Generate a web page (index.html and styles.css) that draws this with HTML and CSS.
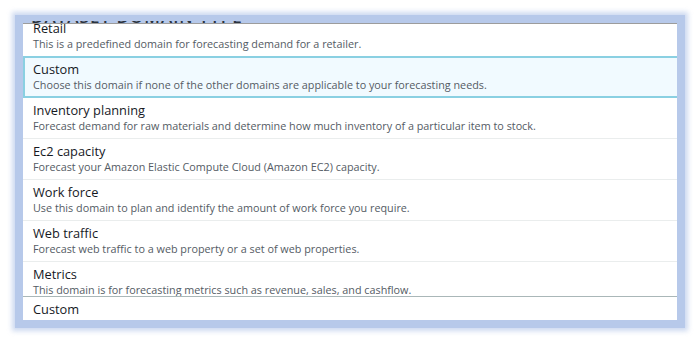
FILE: index.html
```html
<!DOCTYPE html>
<html lang="en">
  <head>
    <meta charset="UTF-8" />
    <title>Domain options</title>
    <link rel="stylesheet" href="styles.css">
  </head>
  <body>
    <div class="dropdown">
      <div class="heading-clip"><span>Dataset domain type</span></div>
      <div class="viewport">
        <ul class="options">
          <li class="option">
            <div class="label">Retail</div>
            <div class="desc">This is a predefined domain for forecasting demand for a retailer.</div>
          </li>
          <li class="option selected">
            <div class="label">Custom</div>
            <div class="desc">Choose this domain if none of the other domains are applicable to your forecasting needs.</div>
          </li>
          <li class="option">
            <div class="label">Inventory planning</div>
            <div class="desc">Forecast demand for raw materials and determine how much inventory of a particular item to stock.</div>
          </li>
          <li class="option">
            <div class="label">Ec2 capacity</div>
            <div class="desc">Forecast your Amazon Elastic Compute Cloud (Amazon EC2) capacity.</div>
          </li>
          <li class="option">
            <div class="label">Work force</div>
            <div class="desc">Use this domain to plan and identify the amount of work force you require.</div>
          </li>
          <li class="option">
            <div class="label">Web traffic</div>
            <div class="desc">Forecast web traffic to a web property or a set of web properties.</div>
          </li>
          <li class="option">
            <div class="label">Metrics</div>
            <div class="desc">This domain is for forecasting metrics such as revenue, sales, and cashflow.</div>
          </li>
        </ul>
      </div>
      <div class="current">Custom</div>
    </div>
  </body>
</html>
```

FILE: styles.css
```css
body {
  margin: 0;
  padding: 23px 20px 21px 23px;
  background: #ffffff;
  font-family: 'Open Sans', 'Noto Sans', sans-serif;
  color: #16191f;
}

.dropdown {
  position: relative;
  width: 654px;
  height: 297px;
  display: flex;
  flex-direction: column;
  background: #ffffff;
  border-top: 1px solid #9c9c9c;
  box-sizing: border-box;
  box-shadow: 0 0 0 8px #b7c9ea, 0 0 5px 11px rgba(183, 201, 234, 0.7);
}

/* bottom edge of the page heading, peeking over the list */
.heading-clip {
  position: absolute;
  left: 8px;
  top: -3px;
  width: 225px;
  height: 3px;
  overflow: hidden;
  z-index: 2;
  font-size: 17px;
  font-weight: 600;
  line-height: 3px;
  letter-spacing: 1px;
  text-transform: uppercase;
  white-space: nowrap;
  color: #2a3340;
}

.heading-clip span {
  display: block;
  height: 3px;
  margin-top: -6px;
  line-height: 3px;
}

.viewport {
  flex: 1;
  overflow: hidden;
  border-bottom: 1px solid #aab7b8;
}

.options {
  list-style: none;
  margin: -8px 0 0;
  padding: 0;
}

.option {
  height: 41px;
  box-sizing: border-box;
  padding: 4px 10px 0;
  border-bottom: 1px solid #eaeded;
}

.option.selected {
  margin-top: -1px;
  height: 42px;
  padding-top: 3px;
  padding-left: 8px;
  background: #f1faff;
  border: 2px solid #8ad0e2;
  border-right: none;
}

.label {
  font-size: 12.8px;
  line-height: 17px;
}

.desc {
  font-size: 10.8px;
  line-height: 14px;
  color: #545b64;
  white-space: nowrap;
}

.current {
  height: 23px;
  padding: 4px 10px 0;
  box-sizing: border-box;
  font-size: 12.8px;
  line-height: 17px;
}
```
